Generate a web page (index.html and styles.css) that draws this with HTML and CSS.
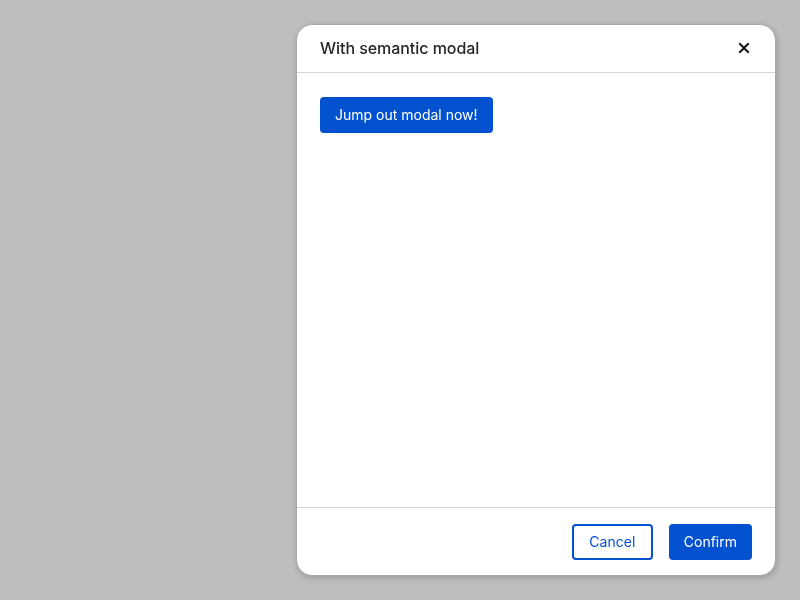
FILE: index.html
```html
<!DOCTYPE html>
<html>
<head>
<meta charset="utf-8">
<link rel="stylesheet" href="styles.css">
</head>
<body>
<div class="overlay">
  <div class="modal" role="dialog" aria-labelledby="mt">
    <header class="modal-header">
      <h2 id="mt" class="modal-title">With semantic modal</h2>
      <button class="close" aria-label="Close">
        <svg width="12" height="12" viewBox="0 0 12 12"><path d="M2 2L10 10M10 2L2 10" stroke="#111" stroke-width="2" stroke-linecap="square"/></svg>
      </button>
    </header>
    <div class="modal-body">
      <button class="btn btn-primary">Jump out modal now!</button>
    </div>
    <footer class="modal-footer">
      <button class="btn btn-outline">Cancel</button>
      <button class="btn btn-primary">Confirm</button>
    </footer>
  </div>
</div>
</body>
</html>
```
FILE: styles.css
```css
html, body {
  margin: 0;
  height: 100%;
}
body {
  background: #bebebe;
  font-family: Inter, "Liberation Sans", sans-serif;
  color: #262626;
}
.overlay {
  position: fixed;
  inset: 0;
}
.modal {
  position: absolute;
  left: 296px;
  top: 24px;
  width: 478px;
  height: 550px;
  background: #fff;
  border: 1px solid #a8a8a8;
  border-radius: 16px;
  box-shadow: 1px 2px 6px rgba(0,0,0,0.2);
  display: flex;
  flex-direction: column;
  overflow: hidden;
}
.modal-header {
  display: flex;
  align-items: center;
  justify-content: space-between;
  height: 47px;
  padding: 0 24px 0 23px;
  border-bottom: 1px solid #d6d6d6;
}
.modal-title {
  margin: 0 0 2px;
  font-size: 16px;
  font-weight: 500;
  letter-spacing: -0.05px;
  color: #262626;
}
.close {
  background: none;
  border: 0;
  padding: 0;
  width: 12px;
  height: 12px;
  display: flex;
  margin-right: 1px;
  margin-bottom: 1px;
}
.modal-body {
  flex: 1;
  padding: 24px 23px;
}
.modal-footer {
  display: flex;
  justify-content: flex-end;
  gap: 16px;
  padding: 16px 23px 15px;
  border-top: 1px solid #d6d6d6;
}
.btn {
  font-family: inherit;
  font-size: 14px;
  height: 36px;
  padding: 0 15px 1px;
  border-radius: 4px;
  box-sizing: border-box;
  cursor: pointer;
}
.btn-primary {
  background: #0251cf;
  color: #fff;
  border: 0;
}
.btn-outline {
  background: #fff;
  color: #0251cf;
  border: 2px solid #0251cf;
  padding: 0 15.5px 1px;
}
```
